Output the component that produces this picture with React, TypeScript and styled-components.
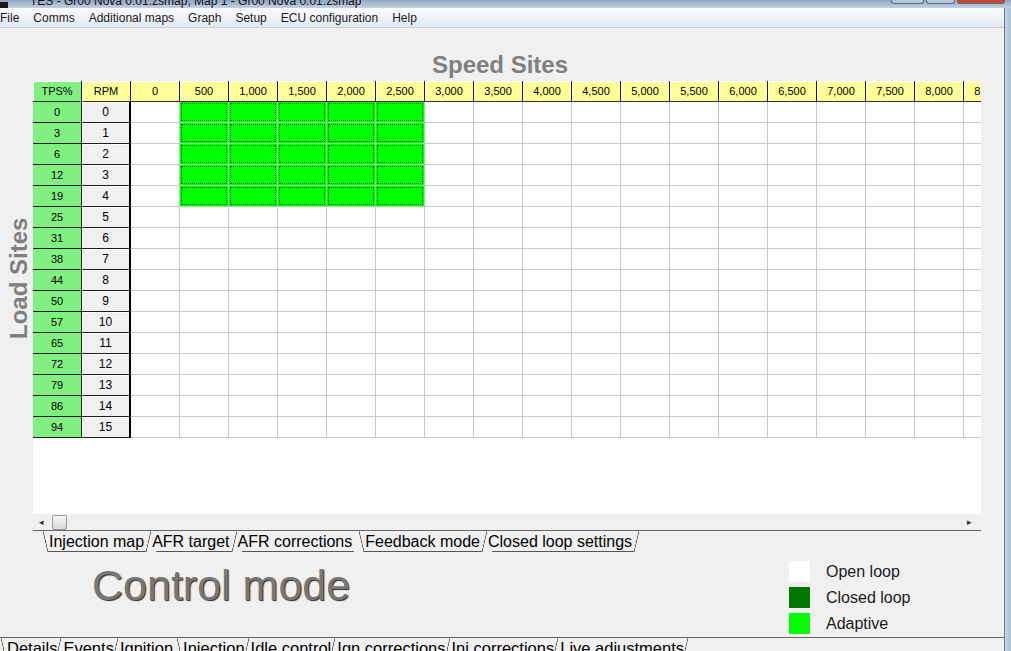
import React from "react";
import styled, { createGlobalStyle } from "styled-components";

const menuItems = ["File", "Comms", "Additional maps", "Graph", "Setup", "ECU configuration", "Help"];
const tpsSites = [0, 3, 6, 12, 19, 25, 31, 38, 44, 50, 57, 65, 72, 79, 86, 94];
const speedSites = Array.from({ length: 18 }, (_, i) => (i * 500).toLocaleString("en-US"));
const mapTabs = ["Injection map", "AFR target", "AFR corrections", "Feedback mode", "Closed loop settings"];
const pageTabs = ["Details", "Events", "Ignition", "Injection", "Idle control", "Ign corrections", "Inj corrections", "Live adjustments"];
const legend = [
    { label: "Open loop", color: "#ffffff" },
    { label: "Closed loop", color: "#007800" },
    { label: "Adaptive", color: "#00ff00" },
];

const isAdaptive = (row: number, col: number) => row < 5 && col >= 1 && col <= 5;

type StripProps = { tabs: string[]; active: number; inset: number; tight?: boolean };

const TabStrip = ({ tabs, active, inset, tight }: StripProps) => (
    <TabRow $inset={inset}>
        {tabs.map((t, i) => (
            <Tab key={t} $left={i === 0 || i === active} $right={i + 1 !== active} $tight={!!tight}>
                {t}
            </Tab>
        ))}
    </TabRow>
);

const App = () => {
    return (
        <>
            <GlobalStyle />
            <TitleStrip>
                <TitleIcon />
                <TitleText>TES - Gr00 Nova 0.01.zsmap, Map 1 - Gr00 Nova 0.01.zsmap</TitleText>
                <TitleButtons>
                    <WinButton $w={31} />
                    <WinButton $w={27} />
                    <WinButton $w={46} $close />
                </TitleButtons>
            </TitleStrip>
            <Body>
                <Main>
                    <MenuBar>
                        {menuItems.map(m => (
                            <MenuItem key={m}>{m}</MenuItem>
                        ))}
                    </MenuBar>
                    <SpeedTitle>Speed Sites</SpeedTitle>
                    <MapRow>
                        <LoadTitle>Load Sites</LoadTitle>
                        <MapColumn>
                            <GridPanel>
                                <MapGrid>
                                    <HeadCell $bg="#80f080">TPS%</HeadCell>
                                    <HeadCell $bg="#ffff99">RPM</HeadCell>
                                    {speedSites.map(s => (
                                        <HeadCell key={s} $bg="#ffff99">{s}</HeadCell>
                                    ))}
                                    {tpsSites.map((tps, row) => (
                                        <React.Fragment key={row}>
                                            <TpsCell>{tps}</TpsCell>
                                            <RpmCell>{row}</RpmCell>
                                            {speedSites.map((s, col) => (
                                                <DataCell key={s} $on={isAdaptive(row, col)}>
                                                    {isAdaptive(row, col) && <FocusMark />}
                                                </DataCell>
                                            ))}
                                        </React.Fragment>
                                    ))}
                                </MapGrid>
                            </GridPanel>
                            <ScrollBar>
                                <Arrow>◂</Arrow>
                                <Thumb />
                                <Spacer />
                                <Arrow>▸</Arrow>
                            </ScrollBar>
                            <TabStrip tabs={mapTabs} active={3} inset={10} />
                        </MapColumn>
                    </MapRow>
                    <ModePanel>
                        <ControlMode>Control mode</ControlMode>
                        <Legend>
                            {legend.map(l => (
                                <LegendRow key={l.label}>
                                    <Swatch $color={l.color} />
                                    <span>{l.label}</span>
                                </LegendRow>
                            ))}
                        </Legend>
                    </ModePanel>
                    <TabStrip tabs={pageTabs} active={3} inset={1} tight />
                </Main>
                <Frame />
            </Body>
        </>
    );
};

export default App;

const GlobalStyle = createGlobalStyle`
    html, body {
        margin: 0;
        padding: 0;
        background: #f0f0f0;
        overflow: hidden;
    }
    body {
        font-family: "Liberation Sans", Arial, sans-serif;
        color: #000;
    }
`;

const TitleStrip = styled.div`
    display: flex;
    align-items: flex-start;
    height: 8px;
    width: 1011px;
    overflow: hidden;
    background: linear-gradient(#8fa6bf, #c3d2e1);
`;

const TitleIcon = styled.div`
    width: 8px;
    height: 6px;
    margin-top: 2px;
    background: #1a1a1a;
    flex: none;
`;

const TitleText = styled.div`
    height: 8px;
    overflow: hidden;
    font-size: 12px;
    line-height: 3px;
    margin-left: 22px;
    color: #111;
    white-space: nowrap;
`;

const TitleButtons = styled.div`
    display: flex;
    gap: 2px;
    margin-left: auto;
    margin-right: 6px;
`;

const WinButton = styled.div<{ $w: number; $close?: boolean }>`
    width: ${p => p.$w}px;
    height: 3px;
    border: 1px solid #5c6a7a;
    border-top: none;
    border-radius: 0 0 3px 3px;
    background: ${p => (p.$close ? "#c9463a" : "#b8c8d8")};
`;

const Body = styled.div`
    display: flex;
    width: 1011px;
    height: 643px;
`;

const Main = styled.div`
    width: 1004px;
    border-right: 1px solid #707a84;
    display: flex;
    flex-direction: column;
    background: #f0f0f0;
    overflow: hidden;

    & > * {
        flex: none;
    }
`;

const Frame = styled.div`
    flex: 1;
    background: linear-gradient(90deg, #c7d7e6, #a9c0d6);
`;

const MenuBar = styled.div`
    display: flex;
    align-items: center;
    gap: 14px;
    height: 19px;
    background: linear-gradient(#fbfcfe, #e3e9f2);
    border-bottom: 1px solid #c5ccd6;
    font-size: 12px;
    color: #1b1b1b;
`;

const MenuItem = styled.span`
    white-space: nowrap;
`;

const SpeedTitle = styled.div`
    height: 51px;
    padding: 0 0 2px 432px;
    display: flex;
    align-items: flex-end;
    font-size: 24px;
    line-height: 28px;
    font-weight: bold;
    color: #808080;
`;

const MapRow = styled.div`
    display: flex;
`;

const LoadTitle = styled.div`
    width: 33px;
    height: 433px;
    box-sizing: border-box;
    display: flex;
    justify-content: center;
    align-items: flex-end;
    padding: 39px 0 0 0;
    writing-mode: vertical-rl;
    transform: rotate(180deg);
    font-size: 24px;
    line-height: 28px;
    font-weight: bold;
    color: #808080;
`;

const MapColumn = styled.div`
    width: 948px;
    display: flex;
    flex-direction: column;
`;

const GridPanel = styled.div`
    height: 433px;
    background: #ffffff;
    overflow: hidden;
`;

const MapGrid = styled.div`
    display: grid;
    grid-template-columns: repeat(20, 49px);
    grid-auto-rows: 21px;
    width: 980px;
    font-size: 11px;
`;

const CellBase = styled.div`
    box-sizing: border-box;
    display: flex;
    align-items: center;
    justify-content: center;
    white-space: nowrap;
`;

const HeadCell = styled(CellBase)<{ $bg: string }>`
    background: ${p => p.$bg};
    border-right: 1px solid #1e1e1e;
    border-bottom: 1px solid #303030;
    box-shadow: inset 1px 1px 0 #ffffff;
`;

const TpsCell = styled(CellBase)`
    background: #80f080;
    border-right: 1px solid #1e1e1e;
    border-bottom: 1px solid #1e1e1e;
`;

const RpmCell = styled(CellBase)`
    background: #f0f0f0;
    border-right: 2px solid #000000;
    border-bottom: 1px solid #1e1e1e;
    box-shadow: inset 1px 1px 0 #ffffff;
    font-size: 12px;
`;

const DataCell = styled(CellBase)<{ $on: boolean }>`
    background: ${p => (p.$on ? "#00ff00" : "#ffffff")};
    border-right: 1px solid ${p => (p.$on ? "#7cf07c" : "#c8c8c8")};
    border-bottom: 1px solid ${p => (p.$on ? "#7cf07c" : "#c8c8c8")};
    padding: 1px;
    align-items: stretch;
    justify-content: stretch;
`;

const FocusMark = styled.div`
    flex: 1;
    border: 1px dotted #24582a;
`;

const ScrollBar = styled.div`
    height: 16px;
    display: flex;
    align-items: center;
    padding: 0 6px;
    background: #f0f0f0;
    font-size: 9px;
    color: #333;
`;

const Arrow = styled.span`
    width: 8px;
    line-height: 10px;
`;

const Thumb = styled.div`
    width: 13px;
    height: 13px;
    margin-left: 5px;
    border: 1px solid #9a9a9a;
    border-radius: 2px;
    background: linear-gradient(#f6f6f6, #d8d8d8);
`;

const Spacer = styled.div`
    flex: 1;
`;

const TabRow = styled.div<{ $inset: number }>`
    display: flex;
    height: 22px;
    padding-left: ${p => p.$inset}px;
    border-top: 1px solid #666666;
`;

const slashLeft = "linear-gradient(to top right, transparent calc(50% - 0.7px), #4a4a4a 50%, transparent calc(50% + 0.7px))";
const slashRight = "linear-gradient(to bottom right, transparent calc(50% - 0.7px), #4a4a4a 50%, transparent calc(50% + 0.7px))";

const Tab = styled.div<{ $left: boolean; $right: boolean; $tight: boolean }>`
    height: 21px;
    padding-right: ${p => (p.$tight ? 4 : 7)}px;
    padding-left: ${p => (p.$left ? 6 : p.$tight ? 2 : 1)}px;
    display: flex;
    align-items: center;
    font-size: ${p => (p.$tight ? 16.5 : 16)}px;
    white-space: nowrap;
    color: #000;
    background-image: ${p => (p.$left ? slashLeft : "none")}, ${p => (p.$right ? slashRight : "none")},
        linear-gradient(#555555, #555555);
    background-size: 5px 100%, 5px 100%, calc(100% - 10px) 1px;
    background-position: left top, right top, center bottom;
    background-repeat: no-repeat;
`;

const ModePanel = styled.div`
    display: grid;
    grid-template-columns: 789px auto;
    height: 84px;
`;

const ControlMode = styled.div`
    padding: 7px 0 0 92px;
    font-size: 43px;
    line-height: 50px;
    color: #777777;
    text-shadow: 1px 1px 1px #2b2b2b;
    white-space: nowrap;
`;

const Legend = styled.div`
    display: flex;
    flex-direction: column;
    gap: 5px;
    padding-top: 8px;
`;

const LegendRow = styled.div`
    display: flex;
    align-items: center;
    gap: 16px;
    height: 21px;
    font-size: 16px;
    color: #1a1a1a;
`;

const Swatch = styled.div<{ $color: string }>`
    width: 21px;
    height: 21px;
    background: ${p => p.$color};
`;
